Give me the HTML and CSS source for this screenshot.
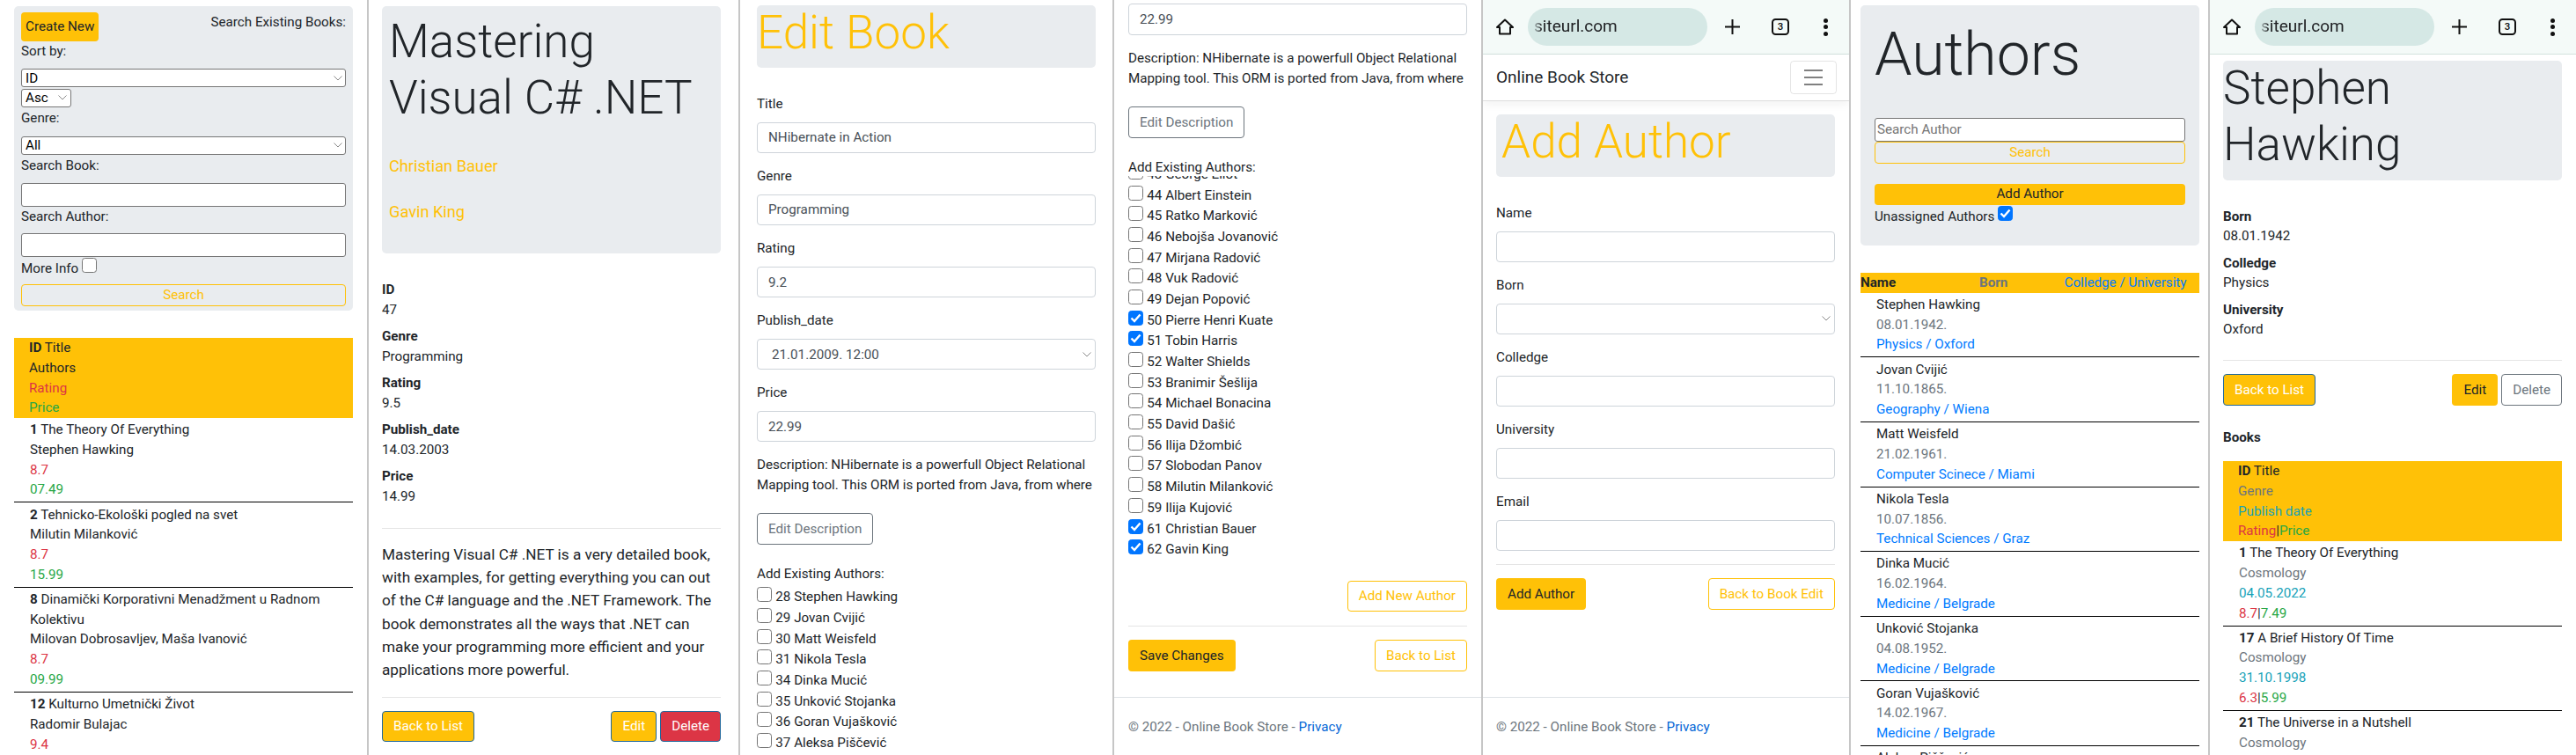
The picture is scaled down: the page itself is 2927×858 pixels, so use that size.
FILE: index.html
```html
<!DOCTYPE HTML>
<html>
<head>
<meta http-equiv="Content-Type" content="text/html; charset=utf-8">
<title>Online Book Store</title>
<link rel="stylesheet" href="styles.css">
</head>
<body>
<div class="screens">

<!-- book list -->
<section class="phone phone-1">
	<div class="content top-7">
		<div class="jumbo search-box">
			<div class="search-head">
				<button class="btn btn-yellow btn-create">Create New</button>
				<span>Search Existing Books:</span>
			</div>
			<label class="small-label">Sort by:</label>
			<select class="small-select"><option>ID</option></select>
			<select class="small-select select-asc"><option>Asc</option></select>
			<label class="small-label after-select">Genre:</label>
			<select class="small-select"><option>All</option></select>
			<label class="small-label after-select">Search Book:</label>
			<input class="small-input" type="text">
			<label class="small-label after-input">Search Author:</label>
			<input class="small-input" type="text">
			<div class="more-info">More Info <input class="check" type="checkbox"></div>
			<button class="btn btn-line-yellow btn-thin">Search</button>
		</div>
		<div class="list-head book-head">
			<div><b>ID</b> Title</div>
			<div>Authors</div>
			<div class="red">Rating</div>
			<div class="green">Price</div>
		</div>
		<div class="item">
			<div><b>1</b> The Theory Of Everything</div>
			<div>Stephen Hawking</div>
			<div class="red">8.7</div>
			<div class="green">07.49</div>
		</div>
		<div class="item">
			<div><b>2</b> Tehnicko-Ekološki pogled na svet</div>
			<div>Milutin Milanković</div>
			<div class="red">8.7</div>
			<div class="green">15.99</div>
		</div>
		<div class="item">
			<div><b>8</b> Dinamički Korporativni Menadžment u Radnom Kolektivu</div>
			<div>Milovan Dobrosavljev, Maša Ivanović</div>
			<div class="red">8.7</div>
			<div class="green">09.99</div>
		</div>
		<div class="item">
			<div><b>12</b> Kulturno Umetnički Život</div>
			<div>Radomir Bulajac</div>
			<div class="red">9.4</div>
		</div>
	</div>
</section>

<!-- book details -->
<section class="phone phone-2">
	<div class="content top-7">
		<div class="jumbo book-jumbo">
			<h1 class="display">Mastering Visual C# .NET</h1>
			<p class="lead-line first yellow">Christian Bauer</p>
			<p class="lead-line yellow">Gavin King</p>
		</div>
		<dl class="details">
			<dt>ID</dt><dd>47</dd>
			<dt>Genre</dt><dd>Programming</dd>
			<dt>Rating</dt><dd>9.5</dd>
			<dt>Publish_date</dt><dd>14.03.2003</dd>
			<dt>Price</dt><dd>14.99</dd>
		</dl>
		<hr class="rule rule-details">
		<p class="book-text">Mastering Visual C# .NET is a very detailed book, with examples, for getting everything you can out of the C# language and the .NET Framework. The book demonstrates all the ways that .NET can make your programming more efficient and your applications more powerful.</p>
		<hr class="rule rule-text">
		<div class="btn-row">
			<button class="btn btn-yellow btn-light-text">Back to List</button>
			<div class="btn-group">
				<button class="btn btn-yellow btn-light-text">Edit</button>
				<button class="btn btn-red">Delete</button>
			</div>
		</div>
	</div>
</section>

<!-- edit book, top of the page -->
<section class="phone phone-3">
	<div class="content top-7">
		<div class="jumbo short-jumbo">
			<h1 class="display yellow edit-title">Edit Book</h1>
		</div>
		<form class="form first-form">
			<div class="group"><label>Title</label><input type="text" value="NHibernate in Action"></div>
			<div class="group"><label>Genre</label><input type="text" value="Programming"></div>
			<div class="group"><label>Rating</label><input type="text" value="9.2"></div>
			<div class="group"><label>Publish_date</label><select><option>21.01.2009. 12:00</option></select></div>
			<div class="group"><label>Price</label><input type="text" value="22.99"></div>
		</form>
		<p class="description">Description: NHibernate is a powerfull Object Relational Mapping tool. This ORM is ported from Java, from where</p>
		<button class="btn btn-line-grey btn-description">Edit Description</button>
		<div class="authors-title">Add Existing Authors:</div>
		<div class="author-list">
			<label class="author"><input class="check" type="checkbox"><span>28 Stephen Hawking</span></label>
			<label class="author"><input class="check" type="checkbox"><span>29 Jovan Cvijić</span></label>
			<label class="author"><input class="check" type="checkbox"><span>30 Matt Weisfeld</span></label>
			<label class="author"><input class="check" type="checkbox"><span>31 Nikola Tesla</span></label>
			<label class="author"><input class="check" type="checkbox"><span>34 Dinka Mucić</span></label>
			<label class="author"><input class="check" type="checkbox"><span>35 Unković Stojanka</span></label>
			<label class="author"><input class="check" type="checkbox"><span>36 Goran Vujašković</span></label>
			<label class="author"><input class="check" type="checkbox"><span>37 Aleksa Piščević</span></label>
		</div>
	</div>
</section>

<!-- edit book, scrolled down -->
<section class="phone phone-4">
	<div class="content top-4">
		<div class="form"><input type="text" value="22.99"></div>
		<p class="description scrolled-description">Description: NHibernate is a powerfull Object Relational Mapping tool. This ORM is ported from Java, from where</p>
		<button class="btn btn-line-grey btn-description">Edit Description</button>
		<div class="authors-title">Add Existing Authors:</div>
		<div class="author-scroll">
			<div class="author-scroll-inner">
				<label class="author"><input class="check" type="checkbox"><span>43 George Eliot</span></label>
				<label class="author"><input class="check" type="checkbox"><span>44 Albert Einstein</span></label>
				<label class="author"><input class="check" type="checkbox"><span>45 Ratko Marković</span></label>
				<label class="author"><input class="check" type="checkbox"><span>46 Nebojša Jovanović</span></label>
				<label class="author"><input class="check" type="checkbox"><span>47 Mirjana Radović</span></label>
				<label class="author"><input class="check" type="checkbox"><span>48 Vuk Radović</span></label>
				<label class="author"><input class="check" type="checkbox"><span>49 Dejan Popović</span></label>
				<label class="author"><input class="check" type="checkbox" checked><span>50 Pierre Henri Kuate</span></label>
				<label class="author"><input class="check" type="checkbox" checked><span>51 Tobin Harris</span></label>
				<label class="author"><input class="check" type="checkbox"><span>52 Walter Shields</span></label>
				<label class="author"><input class="check" type="checkbox"><span>53 Branimir Šešlija</span></label>
				<label class="author"><input class="check" type="checkbox"><span>54 Michael Bonacina</span></label>
				<label class="author"><input class="check" type="checkbox"><span>55 David Dašić</span></label>
				<label class="author"><input class="check" type="checkbox"><span>56 Ilija Džombić</span></label>
				<label class="author"><input class="check" type="checkbox"><span>57 Slobodan Panov</span></label>
				<label class="author"><input class="check" type="checkbox"><span>58 Milutin Milanković</span></label>
				<label class="author"><input class="check" type="checkbox"><span>59 Ilija Kujović</span></label>
				<label class="author"><input class="check" type="checkbox" checked><span>61 Christian Bauer</span></label>
				<label class="author"><input class="check" type="checkbox" checked><span>62 Gavin King</span></label>
			</div>
		</div>
		<div class="btn-row end-row">
			<button class="btn btn-line-yellow">Add New Author</button>
		</div>
		<hr class="rule rule-save">
		<div class="btn-row">
			<button class="btn btn-yellow">Save Changes</button>
			<button class="btn btn-line-yellow">Back to List</button>
		</div>
	</div>
	<footer class="footer">© 2022 - Online Book Store - <a href="#">Privacy</a></footer>
</section>

<!-- add author -->
<section class="phone phone-5">
	<div class="browser-bar">
		<svg class="icon-home" width="20" height="19" viewBox="0 0 20 19"><path d="M1 10 10 1.5 19 10H16V17.5H4V10Z"/></svg>
		<div class="url-pill"><span class="url-text">siteurl.com</span></div>
		<svg class="icon-plus" width="17" height="17" viewBox="0 0 17 17"><path d="M8.5 0V17M0 8.5H17"/></svg>
		<div class="icon-tabs">3</div>
		<div class="icon-dots"><i></i><i></i><i></i></div>
	</div>
	<nav class="navbar">
		<span class="brand">Online Book Store</span>
		<div class="toggler"><i></i><i></i><i></i></div>
	</nav>
	<div class="content top-15">
		<div class="jumbo short-jumbo add-jumbo">
			<h1 class="display yellow">Add Author</h1>
		</div>
		<form class="form author-form">
			<div class="group"><label>Name</label><input type="text"></div>
			<div class="group"><label>Born</label><select><option></option></select></div>
			<div class="group"><label>Colledge</label><input type="text"></div>
			<div class="group"><label>University</label><input type="text"></div>
			<div class="group"><label>Email</label><input type="text"></div>
		</form>
		<hr class="rule">
		<div class="btn-row">
			<button class="btn btn-yellow">Add Author</button>
			<button class="btn btn-line-yellow">Back to Book Edit</button>
		</div>
	</div>
	<footer class="footer">© 2022 - Online Book Store - <a href="#">Privacy</a></footer>
</section>

<!-- authors list -->
<section class="phone phone-6">
	<div class="content top-6">
		<div class="jumbo authors-jumbo">
			<h1 class="display display-big">Authors</h1>
			<input class="small-input author-search" type="text" placeholder="Search Author">
			<button class="btn btn-line-yellow btn-thin">Search</button>
			<button class="btn btn-yellow btn-thin btn-add-author">Add Author</button>
			<div class="unassigned">Unassigned Authors <input class="check" type="checkbox" checked></div>
		</div>
		<div class="author-head">
			<b>Name</b>
			<b class="grey">Born</b>
			<span class="blue">Colledge / University</span>
		</div>
		<div class="item">
			<div>Stephen Hawking</div>
			<div class="grey">08.01.1942.</div>
			<div class="blue">Physics / Oxford</div>
		</div>
		<div class="item">
			<div>Jovan Cvijić</div>
			<div class="grey">11.10.1865.</div>
			<div class="blue">Geography / Wiena</div>
		</div>
		<div class="item">
			<div>Matt Weisfeld</div>
			<div class="grey">21.02.1961.</div>
			<div class="blue">Computer Scinece / Miami</div>
		</div>
		<div class="item">
			<div>Nikola Tesla</div>
			<div class="grey">10.07.1856.</div>
			<div class="blue">Technical Sciences / Graz</div>
		</div>
		<div class="item">
			<div>Dinka Mucić</div>
			<div class="grey">16.02.1964.</div>
			<div class="blue">Medicine / Belgrade</div>
		</div>
		<div class="item">
			<div>Unković Stojanka</div>
			<div class="grey">04.08.1952.</div>
			<div class="blue">Medicine / Belgrade</div>
		</div>
		<div class="item">
			<div>Goran Vujašković</div>
			<div class="grey">14.02.1967.</div>
			<div class="blue">Medicine / Belgrade</div>
		</div>
		<div class="item">
			<div>Aleksa Piščević</div>
		</div>
	</div>
</section>

<!-- author details -->
<section class="phone phone-7">
	<div class="browser-bar">
		<svg class="icon-home" width="20" height="19" viewBox="0 0 20 19"><path d="M1 10 10 1.5 19 10H16V17.5H4V10Z"/></svg>
		<div class="url-pill"><span class="url-text">siteurl.com</span></div>
		<svg class="icon-plus" width="17" height="17" viewBox="0 0 17 17"><path d="M8.5 0V17M0 8.5H17"/></svg>
		<div class="icon-tabs">3</div>
		<div class="icon-dots"><i></i><i></i><i></i></div>
	</div>
	<div class="content top-7">
		<div class="jumbo person-jumbo">
			<h1 class="display">Stephen<br>Hawking</h1>
		</div>
		<dl class="details">
			<dt>Born</dt><dd>08.01.1942</dd>
			<dt>Colledge</dt><dd>Physics</dd>
			<dt>University</dt><dd>Oxford</dd>
		</dl>
		<hr class="rule rule-person">
		<div class="btn-row">
			<button class="btn btn-yellow btn-light-text">Back to List</button>
			<div class="btn-group">
				<button class="btn btn-yellow">Edit</button>
				<button class="btn btn-line-grey">Delete</button>
			</div>
		</div>
		<div class="books-title"><b>Books</b></div>
		<div class="list-head person-head">
			<div><b>ID</b> Title</div>
			<div class="grey">Genre</div>
			<div class="teal">Publish date</div>
			<div><span class="red">Rating</span>|<span class="green">Price</span></div>
		</div>
		<div class="item">
			<div><b>1</b> The Theory Of Everything</div>
			<div class="grey">Cosmology</div>
			<div class="teal">04.05.2022</div>
			<div><span class="red">8.7</span>|<span class="green">7.49</span></div>
		</div>
		<div class="item">
			<div><b>17</b> A Brief History Of Time</div>
			<div class="grey">Cosmology</div>
			<div class="teal">31.10.1998</div>
			<div><span class="red">6.3</span>|<span class="green">5.99</span></div>
		</div>
		<div class="item">
			<div><b>21</b> The Universe in a Nutshell</div>
			<div class="grey">Cosmology</div>
		</div>
	</div>
</section>

</div>
</body>
</html>
```

FILE: styles.css
```css
*{
	box-sizing:border-box;
}

body{
	margin:0;
	background:white;
	color:#212529;
	font-family:Roboto, "Liberation Sans", sans-serif;
	font-size:15.2px;
	line-height:22.75px;
}

.screens{
	display:flex;
	width:2927px;
	height:858px;
	overflow:hidden;
}

.phone{
	display:flex;
	flex-direction:column;
	flex:none;
	height:858px;
	overflow:hidden;
	border-right:2px solid #c6c6c6;
}

.phone-1{ width:419px; --inset:16px; }
.phone-2{ width:422px; --inset:15px; }
.phone-3{ width:425px; --inset:19px; }
.phone-4{ width:419px; --inset:16px; }
.phone-5{ width:418px; --inset:15px; }
.phone-6{ width:408px; --inset:11px; }
.phone-7{ width:416px; --inset:15px; border-right:0; }

.content{
	flex:none;
	width:385px;
	margin-left:var(--inset);
}

.top-4{ margin-top:4.3px; }
.top-6{ margin-top:6px; }
.top-7{ margin-top:7px; }
.top-15{ margin-top:15px; }

/* colours */
.red{ color:#dc3545; }
.green{ color:#28a745; }
.yellow{ color:#ffc107; }
.grey{ color:#6c757d; }
.blue{ color:#007bff; }
.teal{ color:#17a2b8; }

/* jumbotron */
.jumbo{
	background:#e9ecef;
	border-radius:5px;
}

.display{
	margin:0;
	font-size:53px;
	font-weight:300;
	line-height:63.6px;
}

.display-big{
	font-size:68px;
	line-height:81.6px;
}

.search-box{
	height:346px;
	padding:7px 8px;
}

.search-head{
	display:flex;
	justify-content:space-between;
	align-items:flex-start;
	height:32.5px;
}

.small-label{
	display:block;
	margin-bottom:9px;
}

.after-select{
	margin-top:1px;
}

.after-input{
	margin-top:.6px;
	margin-bottom:7.3px;
}

.small-select{
	appearance:none;
	display:block;
	width:100%;
	height:21px;
	padding:0 0 0 4px;
	border:1px solid #767676;
	border-radius:3px;
	background:white url("data:image/svg+xml,%3Csvg xmlns='http://www.w3.org/2000/svg' width='10' height='6'%3E%3Cpath d='M.5.5 5 5 9.5.5' fill='none' stroke='%23888'/%3E%3C/svg%3E") no-repeat right 3px center;
	color:black;
	font-family:inherit;
	font-size:15.2px;
}

.select-asc{
	width:57px;
	margin-top:1.6px;
	background-position:right 4px center;
}

.small-input{
	display:block;
	width:100%;
	height:26.4px;
	padding:1px 2px;
	border:1px solid #767676;
	border-radius:3px;
	background:white;
	font-family:inherit;
	font-size:15.2px;
}

.small-input::placeholder{
	color:#757575;
	opacity:1;
}

.more-info{
	height:22.75px;
	margin-top:1.3px;
	margin-bottom:7.3px;
}

.check{
	appearance:none;
	flex:none;
	width:17px;
	height:17px;
	margin:0;
	border:1px solid #767676;
	border-radius:3.5px;
	background:white;
	vertical-align:baseline;
}

.check:checked{
	border-color:#0075ff;
	background:#0075ff url("data:image/svg+xml,%3Csvg xmlns='http://www.w3.org/2000/svg' width='15' height='15'%3E%3Cpath d='M2.5 7.5 6 11 12.5 3.5' fill='none' stroke='white' stroke-width='2.4'/%3E%3C/svg%3E") no-repeat center;
}

/* buttons */
.btn{
	display:inline-flex;
	align-items:center;
	justify-content:center;
	height:35.6px;
	padding:0 12px;
	border:1px solid transparent;
	border-radius:4px;
	background:transparent;
	font-family:inherit;
	font-size:15.2px;
	line-height:22.75px;
	white-space:nowrap;
}

.btn-yellow{
	background:#ffc107;
	color:#212529;
}

.btn-light-text{
	border-color:#20689c;
	color:white;
}

.btn-red{
	background:#dc3545;
	border-color:#20689c;
	color:white;
}

.btn-line-yellow{
	border-color:#ffc107;
	color:#ffc107;
}

.btn-line-grey{
	border-color:#6c757d;
	color:#6c757d;
}

.btn-create{
	height:32.5px;
	padding:0 4px;
}

.btn-thin{
	display:flex;
	width:100%;
	height:24.4px;
}

.btn-row{
	display:flex;
	justify-content:space-between;
}

.btn-group{
	display:flex;
	gap:4px;
}

.end-row{
	justify-content:flex-end;
	margin-top:22.5px;
}

.rule{
	height:1px;
	margin:15px 0;
	border:0;
	background:rgba(0, 0, 0, 0.1);
}

/* lists */
.list-head{
	background:#ffc107;
	padding-left:17px;
}

.book-head{
	margin-top:31px;
}

.item{
	padding:2.2px 18px;
	border-bottom:1px solid black;
}

.author-head{
	display:grid;
	grid-template-columns:135px 96.5px 1fr;
	height:22.75px;
	margin-top:31.3px;
	background:#ffc107;
}

.author-head span{
	font-weight:400;
}

/* details */
.book-jumbo{
	height:281.4px;
	padding:9px 8px 0;
}

.lead-line{
	margin:26px 0 0;
	font-size:18.2px;
	line-height:26.3px;
}

.lead-line.first{
	margin-top:33px;
}

.details{
	margin:30px 0 0;
}

.details dt{
	font-weight:700;
}

.details dd{
	margin:0 0 7.5px;
}

.rule-details{
	margin:24px 0 16px;
}

.book-text{
	margin:0;
	font-size:17.2px;
	line-height:26.3px;
}

.rule-text{
	margin:17px 0 15px;
}

/* forms */
.short-jumbo{
	height:71px;
}

.edit-title{
	margin-top:-1px;
	padding-left:0;
}

.add-jumbo{
	padding-left:6px;
}

.first-form,
.author-form{
	margin-top:30px;
}

.group{
	margin-bottom:14.9px;
}

.form label{
	display:block;
	margin-bottom:9px;
}

.form input,
.form select{
	display:block;
	width:100%;
	height:35.4px;
	padding:0 12px;
	border:1px solid #ced4da;
	border-radius:4px;
	background-color:white;
	color:#495057;
	font-family:inherit;
	font-size:15.2px;
}

.form select{
	appearance:none;
	padding-left:16px;
	background:white url("data:image/svg+xml,%3Csvg xmlns='http://www.w3.org/2000/svg' width='10' height='6'%3E%3Cpath d='M.5.5 5 5 9.5.5' fill='none' stroke='%23888'/%3E%3C/svg%3E") no-repeat right 4px center;
}

.description{
	margin:0;
}

.scrolled-description{
	margin-top:15.6px;
}

.btn-description{
	display:flex;
	margin-top:20.5px;
}

.authors-title{
	margin-top:22.5px;
}

.author-list{
	margin-top:3.3px;
}

.author{
	display:flex;
	align-items:flex-start;
	gap:4.3px;
	height:23.7px;
	line-height:23.7px;
}

.author-scroll{
	height:437px;
	margin-top:-2px;
	overflow:hidden;
}

.author-scroll-inner{
	margin-top:-13.3px;
}

.rule-save{
	margin:16px 0 15px;
}

.footer{
	flex:none;
	height:66px;
	margin-top:auto;
	padding:22px 0 0 var(--inset);
	border-top:1px solid #dee2e6;
	color:#6c757d;
}

.footer a{
	color:#0366d6;
	text-decoration:none;
}

/* browser chrome */
.browser-bar{
	display:flex;
	align-items:center;
	flex:none;
	height:62px;
	padding-left:15px;
	background:#f4faf8;
	border-bottom:1px solid #d3e2de;
}

.icon-home path{
	fill:none;
	stroke:#111;
	stroke-width:2;
	stroke-linejoin:round;
}

.url-pill{
	display:flex;
	align-items:center;
	width:204px;
	height:43px;
	margin-left:16px;
	padding-left:7px;
	border-radius:22px;
	background:#d5e8e5;
	overflow:hidden;
}

.url-text{
	font-size:19px;
	color:#202124;
	-webkit-mask-image:linear-gradient(to right, rgba(0,0,0,.2), black 9px);
	mask-image:linear-gradient(to right, rgba(0,0,0,.2), black 9px);
}

.icon-plus{
	margin-left:19.5px;
}

.icon-plus path{
	stroke:#111;
	stroke-width:2;
}

.icon-tabs{
	display:flex;
	align-items:center;
	justify-content:center;
	width:20px;
	height:19.5px;
	margin-left:36.5px;
	border:2px solid #111;
	border-radius:4.5px;
	color:#111;
	font-size:11.5px;
	font-weight:500;
	line-height:1;
}

.icon-dots{
	display:flex;
	flex-direction:column;
	gap:2.5px;
	margin-left:39px;
}

.icon-dots i{
	display:block;
	width:5px;
	height:5px;
	border-radius:50%;
	background:#111;
}

.navbar{
	display:flex;
	align-items:center;
	justify-content:space-between;
	flex:none;
	position:relative;
	height:53px;
	padding:0 14px 0 15px;
	border-bottom:1px solid #dfdfdf;
	box-shadow:0 4px 10px rgba(0, 0, 0, 0.05);
}

.brand{
	font-size:19px;
	color:#212529;
}

.toggler{
	display:flex;
	flex-direction:column;
	justify-content:center;
	gap:6px;
	width:53px;
	height:38px;
	padding:0 15px;
	border:1px solid rgba(0, 0, 0, 0.1);
	border-radius:4px;
}

.toggler i{
	display:block;
	height:2px;
	background:#808080;
}

/* authors */
.authors-jumbo{
	height:272.7px;
	padding:16px;
}

.author-search{
	margin-top:30.7px;
	margin-bottom:.6px;
}

.btn-add-author{
	margin-top:23px;
}

.unassigned{
	margin-top:.9px;
}

/* author details */
.person-jumbo{
	height:135.7px;
}

.rule-person{
	margin:23px 0 15px;
}

.books-title{
	margin-top:25.3px;
}

.person-head{
	margin-top:15.3px;
}
```
